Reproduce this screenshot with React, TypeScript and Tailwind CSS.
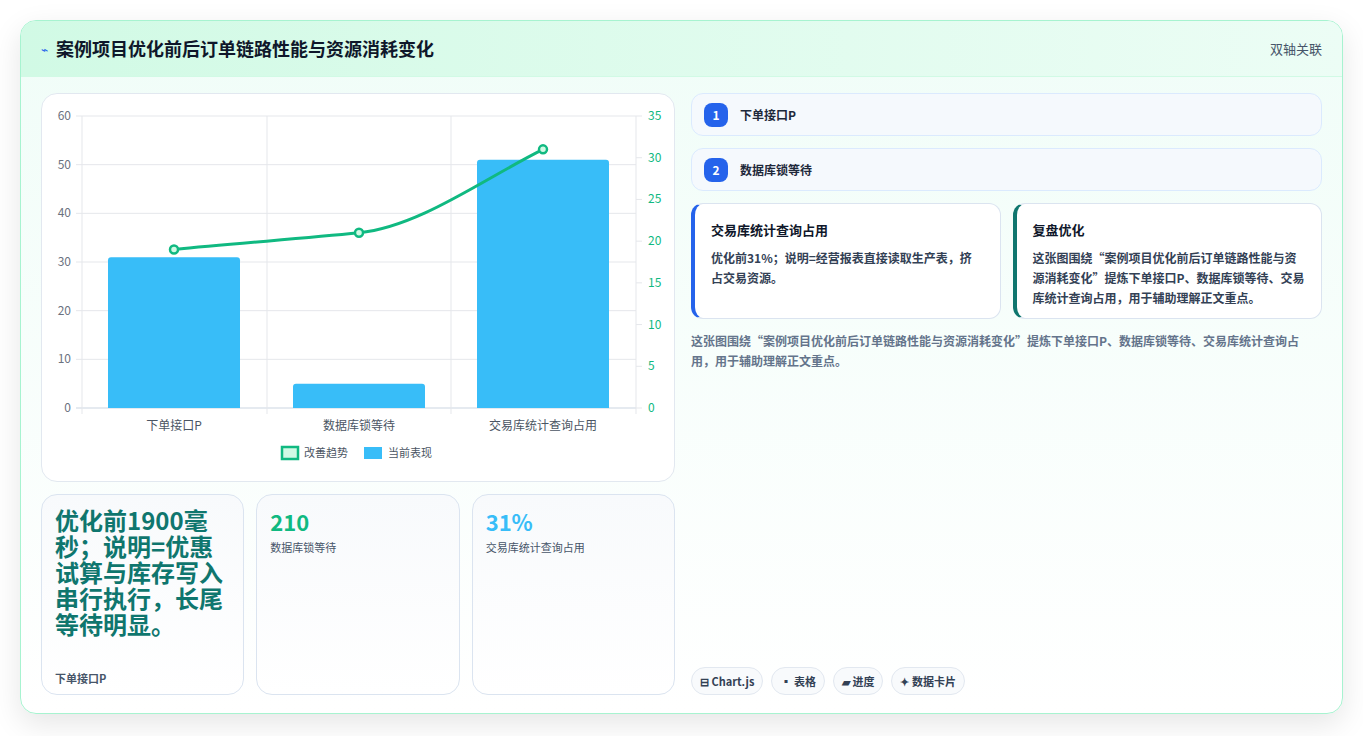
import React from 'react';

const FONT = { fontFamily: '"Noto Sans CJK SC", "Noto Sans", sans-serif' };

const leftTicks = [0, 10, 20, 30, 40, 50, 60];
const rightTicks = [0, 5, 10, 15, 20, 25, 30, 35];
const cats = ['下单接口P', '数据库锁等待', '交易库统计查询占用'];
const bars = [31, 5, 51];
const line = [19, 21, 31];

const yL = (v: number) => 314 - (v / 60) * 292;
const yR = (v: number) => 314 - (v / 35) * 292;
const cx = [132, 317, 501];

const Chart: React.FC = () => {
  const pts = cx.map((x, i) => [x, yR(line[i])]);
  const d = `M${pts[0][0]},${pts[0][1]} C${pts[0][0] + 60},${pts[0][1] - 6} ${pts[1][0] - 60},${pts[1][1] + 6} ${pts[1][0]},${pts[1][1]} S${pts[2][0] - 60},${pts[2][1] + 30} ${pts[2][0]},${pts[2][1]}`;
  return (
    <svg width="634" height="388" className="block">
      {leftTicks.map((t) => (
        <g key={t}>
          <line x1="34" x2="594" y1={yL(t)} y2={yL(t)} stroke={t === 0 ? '#cbd5e1' : '#e5e7eb'} />
          <text x="29" y={yL(t) + 4} textAnchor="end" fontSize="12" fill="#6b7280">{t}</text>
        </g>
      ))}
      {[40, 225, 409, 594].map((x) => (
        <line key={x} x1={x} x2={x} y1="22" y2="320" stroke="#e5e7eb" />
      ))}
      {rightTicks.map((t) => (
        <g key={t}>
          <line x1="594" x2="600" y1={yR(t)} y2={yR(t)} stroke="#e5e7eb" />
          <text x="606" y={yR(t) + 4} fontSize="12" fill="#10b981">{t}</text>
        </g>
      ))}
      {bars.map((v, i) => (
        <path
          key={i}
          d={`M${cx[i] - 66},314 V${yL(v) + 3} Q${cx[i] - 66},${yL(v)} ${cx[i] - 63},${yL(v)} H${cx[i] + 63} Q${cx[i] + 66},${yL(v)} ${cx[i] + 66},${yL(v) + 3} V314 Z`}
          fill="#38bdf8"
        />
      ))}
      <path d={d} fill="none" stroke="#10b981" strokeWidth="3" />
      {pts.map(([x, y], i) => (
        <circle key={i} cx={x} cy={y} r="4" fill="#d1fae5" stroke="#10b981" strokeWidth="2.5" />
      ))}
      {cats.map((c, i) => (
        <text key={c} x={cx[i]} y="336" textAnchor="middle" fontSize="12" fill="#4b5563" style={FONT}>{c}</text>
      ))}
      <rect x="240" y="353" width="16" height="12" fill="#d1fae5" stroke="#10b981" strokeWidth="2.5" />
      <text x="262" y="363" fontSize="11" fill="#4b5563" style={FONT}>改善趋势</text>
      <rect x="322" y="353" width="18" height="12" fill="#38bdf8" />
      <text x="346" y="363" fontSize="11" fill="#4b5563" style={FONT}>当前表现</text>
    </svg>
  );
};

export default function App() {
  return (
    <div className="min-h-screen bg-white p-5" style={FONT}>
      <div className="h-[694px] rounded-2xl border border-[#a7f3d0] bg-gradient-to-b from-[#f0fdf8] to-white shadow-[0_10px_30px_rgba(0,0,0,0.1)] overflow-hidden flex flex-col">
        <div className="h-[56px] shrink-0 flex items-center justify-between px-5 bg-gradient-to-r from-[#d1fae5] to-[#ecfdf5] border-b border-[#d1fae5]">
          <div className="flex items-center gap-2">
            <span className="text-[#2563eb] text-xs">⌁</span>
            <h1 className="text-[18px] font-bold text-[#0f172a]">案例项目优化前后订单链路性能与资源消耗变化</h1>
          </div>
          <span className="text-[13px] text-[#475569]">双轴关联</span>
        </div>
        <div className="flex-1 flex gap-4 px-5 pt-4 pb-[18px]">
          <div className="w-[634px] flex flex-col gap-3">
            <div className="h-[389px] rounded-2xl border border-[#e2e8f0] bg-white">
              <Chart />
            </div>
            <div className="flex-1 grid grid-cols-3 gap-3">
              <div className="rounded-2xl border border-[#dbe4f0] bg-gradient-to-b from-[#f8fafc] to-white px-[13px] pt-3 pb-2 flex flex-col">
                <div className="text-[24px] leading-[26px] font-bold text-[#0f766e]">优化前1900毫秒；说明=优惠试算与库存写入串行执行，长尾等待明显。</div>
                <div className="mt-auto text-[11px] font-bold text-[#475569]">下单接口P</div>
              </div>
              <div className="rounded-2xl border border-[#dbe4f0] bg-gradient-to-b from-[#f8fafc] to-white px-[13px] pt-3">
                <div className="text-[22px] leading-[28px] font-bold text-[#10b981]">210</div>
                <div className="mt-1 text-[11px] text-[#475569]">数据库锁等待</div>
              </div>
              <div className="rounded-2xl border border-[#dbe4f0] bg-gradient-to-b from-[#f8fafc] to-white px-[13px] pt-3">
                <div className="text-[22px] leading-[28px] font-bold text-[#38bdf8]">31%</div>
                <div className="mt-1 text-[11px] text-[#475569]">交易库统计查询占用</div>
              </div>
            </div>
          </div>
          <div className="flex-1 flex flex-col">
            {['下单接口P', '数据库锁等待'].map((t, i) => (
              <div key={t} className="h-[43px] mb-3 rounded-xl border border-[#dbeafe] bg-[#f5f9fd] flex items-center gap-3 px-3">
                <span className="w-6 h-6 rounded-lg bg-[#2563eb] text-white text-[12px] font-bold flex items-center justify-center">{i + 1}</span>
                <span className="text-[12px] font-bold text-[#1e293b]">{t}</span>
              </div>
            ))}
            <div className="grid grid-cols-2 gap-3">
              <div className="h-[116px] rounded-xl border border-[#dbe4f0] border-l-4 border-l-[#2563eb] bg-white px-4 pt-4">
                <div className="text-[13px] font-bold text-[#0f172a]">交易库统计查询占用</div>
                <div className="mt-2 text-[12px] leading-[20px] font-semibold text-[#334155]">优化前31%；说明=经营报表直接读取生产表，挤占交易资源。</div>
              </div>
              <div className="h-[116px] rounded-xl border border-[#dbe4f0] border-l-4 border-l-[#0f766e] bg-white px-4 pt-4">
                <div className="text-[13px] font-bold text-[#0f172a]">复盘优化</div>
                <div className="mt-2 text-[12px] leading-[20px] font-semibold text-[#334155]">这张图围绕“案例项目优化前后订单链路性能与资源消耗变化”提炼下单接口P、数据库锁等待、交易库统计查询占用，用于辅助理解正文重点。</div>
              </div>
            </div>
            <p className="mt-3 text-[12px] leading-[20px] font-semibold text-[#64748b]">这张图围绕“案例项目优化前后订单链路性能与资源消耗变化”提炼下单接口P、数据库锁等待、交易库统计查询占用，用于辅助理解正文重点。</p>
            <div className="mt-auto flex gap-2">
              {['⊟ Chart.js', '▪ 表格', '▰ 进度', '✦ 数据卡片'].map((c) => (
                <span key={c} className="h-[28px] px-2 rounded-full border border-[#e2e8f0] bg-[#f8fafc] text-[11px] font-bold text-[#334155] flex items-center">{c}</span>
              ))}
            </div>
          </div>
        </div>
      </div>
    </div>
  );
}
